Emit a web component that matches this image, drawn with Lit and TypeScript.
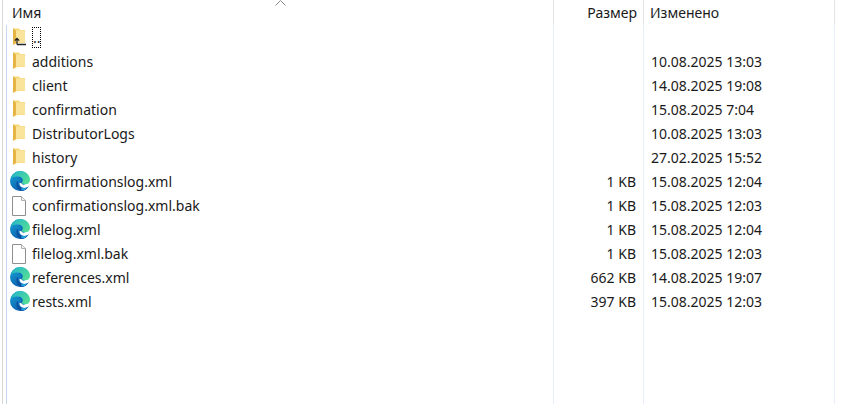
import { LitElement, html, css, svg } from "lit";
import { customElement } from "lit/decorators.js";

type Kind = "up" | "folder" | "edge" | "file";
interface Row { name: string; kind: Kind; size: string; date: string; }

const rows: Row[] = [
  { name: "..", kind: "up", size: "", date: "" },
  { name: "additions", kind: "folder", size: "", date: "10.08.2025 13:03" },
  { name: "client", kind: "folder", size: "", date: "14.08.2025 19:08" },
  { name: "confirmation", kind: "folder", size: "", date: "15.08.2025 7:04" },
  { name: "DistributorLogs", kind: "folder", size: "", date: "10.08.2025 13:03" },
  { name: "history", kind: "folder", size: "", date: "27.02.2025 15:52" },
  { name: "confirmationslog.xml", kind: "edge", size: "1 KB", date: "15.08.2025 12:04" },
  { name: "confirmationslog.xml.bak", kind: "file", size: "1 KB", date: "15.08.2025 12:03" },
  { name: "filelog.xml", kind: "edge", size: "1 KB", date: "15.08.2025 12:04" },
  { name: "filelog.xml.bak", kind: "file", size: "1 KB", date: "15.08.2025 12:03" },
  { name: "references.xml", kind: "edge", size: "662 KB", date: "14.08.2025 19:07" },
  { name: "rests.xml", kind: "edge", size: "397 KB", date: "15.08.2025 12:03" },
];

const folderShape = svg`
  <path d="M4 2.500h6l1 1.500h5v13H8.500L4 19z" fill="#f6d77a"/>
  <path d="M7 4.500h9v12H7z" fill="#fae39a"/>
  <path d="M4 2.500V19l3-2.500v-12z" fill="#e6b444"/>`;

function icon(kind: Kind) {
  if (kind === "folder") {
    return html`<svg class="ic" viewBox="0 0 22 22">${folderShape}</svg>`;
  }
  if (kind === "up") {
    return html`<svg class="ic" viewBox="0 0 22 22">${folderShape}
      <path d="M8 18.500V12.500M5.800 14.600 8 12.400l2.200 2.200M8 18.500h9" fill="none" stroke="#222" stroke-width="1.300"/></svg>`;
  }
  if (kind === "file") {
    return html`<svg class="ic" viewBox="0 0 22 22">
      <path d="M3.500 2.500h9l4 4v15h-13z" fill="#fff" stroke="#8f8f8f"/>
      <path d="M12.500 2.500v4h4" fill="#f0f0f0" stroke="#b0b0b0"/></svg>`;
  }
  return html`<svg class="ic" viewBox="0 0 22 22">
    <defs>
      <linearGradient id="eb" x1="0" y1="0" x2="0.5" y2="1">
        <stop offset="0" stop-color="#1aa6d6"/><stop offset="1" stop-color="#0a5fb0"/>
      </linearGradient>
      <linearGradient id="eg" x1="0" y1="0" x2="1" y2="0.6">
        <stop offset="0" stop-color="#22b4cc"/><stop offset="1" stop-color="#52dc98"/>
      </linearGradient>
    </defs>
    <circle cx="11" cy="11" r="10" fill="url(#eb)"/>
    <path d="M8.500 7.500c3.500-1.500 7.500.5 8 3.500.2 1.500-1 2.500-2.500 2.500-1.500 0-2.500-.6-2-1.500C13 9 10 7 8.500 7.500z" fill="#0d6fb8"/>
    <path d="M9 13c0 3.300 3 5.500 5.500 5.500 2 0 4-1 5.500-3-1 3.500-4.500 5.500-8 5.500-1 0-1-.5-1.500-1C8 18.500 6.800 15 8 11.500 8.500 10.500 9 11.500 9 13z" fill="#0b4f9c"/>
    <path d="M10.500 13.300c0 2.800 2.300 4.700 5 4.700 2.500 0 4.500-1.500 5.500-4V11c0-1-1-1-1.500-.6-.6.800-1 2-3 3.600-2 1.200-3 .8-3.500-.2-.6-.6-2.500-1-2.500-.500z" fill="#fff"/>
    <path d="M12.500 17.500c2 .9 4 .8 6-.5-1.500 2.500-3.500 3.500-6 3.500z" fill="#1f9fe0"/>
    <path d="M2 8.500C3.500 3.500 7.500 1 11.500 1c5 0 9.500 4 9.500 9 0 2.800-2.200 4.300-4.600 4.300-1.800 0-3.400-.7-3.800-1.500.8-.6 1.400-1.500 1.200-2.800C13.500 8 11.500 6.500 9 6.500 6 6.500 3 7 2 8.500z" fill="url(#eg)"/>
  </svg>`;
}

@customElement("app-root")
export class AppRoot extends LitElement {
  static styles = css`
    :host {
      display: block;
      width: 841px;
      height: 404px;
      overflow: hidden;
      background: #fff;
      font-family: "Noto Sans", "Open Sans", sans-serif;
      font-size: 14px;
      color: #1a1a1a;
    }
    .frame {
      position: relative;
      display: flex;
      height: 404px;
      padding-left: 2px;
      box-sizing: border-box;
    }
    .edge-line {
      width: 1px;
      background: #d9d9d9;
      margin-right: 4px;
    }
    .col {
      display: flex;
      flex-direction: column;
      box-sizing: border-box;
    }
    .col.name { width: 547px; }
    .col.size { width: 90px; }
    .col.date { width: 191px; }
    .col > .head {
      height: 25px;
      line-height: 26px;
      box-sizing: border-box;
      border-right: 1px solid #e5e5e5;
      white-space: nowrap;
      flex: none;
    }
    .col > .body {
      flex: 1;
      border-left: 1px solid #e6effa;
      margin-left: -1px;
    }
    .col.name > .body { border-left-color: #c5d6ef; }
    .col.name > .head { padding-left: 5px; }
    .col.size > .head { text-align: right; padding-right: 6px; }
    .col.date > .head { padding-left: 6px; }
    .cell {
      height: 24px;
      line-height: 24px;
      white-space: nowrap;
      display: flex;
      align-items: center;
    }
    .text { position: relative; top: 1px; }
    .col.size .cell { justify-content: flex-end; padding-right: 8px; }
    .col.date .cell { padding-left: 7px; }
    .col.date > .body { border-right: 1px solid #e6effa; }
    .col.name .cell { padding-left: 2px; }
    .ic { width: 22px; height: 22px; flex: none; margin-right: 1px; }
    .text.up {
      top: 0;
      display: block;
      width: 8px;
      height: 21px;
      line-height: 21px;
      padding-left: 1px;
      outline: 1px dotted #000;
      outline-offset: -1px;
    }
    .sort {
      position: absolute;
      left: 275px;
      top: 0;
    }
  `;

  render() {
    return html`
      <div class="frame">
        <div class="edge-line"></div>
        <div class="col name">
          <div class="head">Имя</div>
          <div class="body">
            ${rows.map(
              (r) => html`<div class="cell">${icon(r.kind)}<span class="text ${r.kind === "up" ? "up" : ""}">${r.name}</span></div>`
            )}
          </div>
        </div>
        <div class="col size">
          <div class="head">Размер</div>
          <div class="body">${rows.map((r) => html`<div class="cell"><span class="text">${r.size}</span></div>`)}</div>
        </div>
        <div class="col date">
          <div class="head">Изменено</div>
          <div class="body">${rows.map((r) => html`<div class="cell"><span class="text">${r.date}</span></div>`)}</div>
        </div>
        <svg class="sort" width="11" height="6" viewBox="0 0 11 6">
          <path d="M.5 5.500 5.500.5l5 5" fill="none" stroke="#8a8a8a"/>
        </svg>
      </div>
    `;
  }
}
